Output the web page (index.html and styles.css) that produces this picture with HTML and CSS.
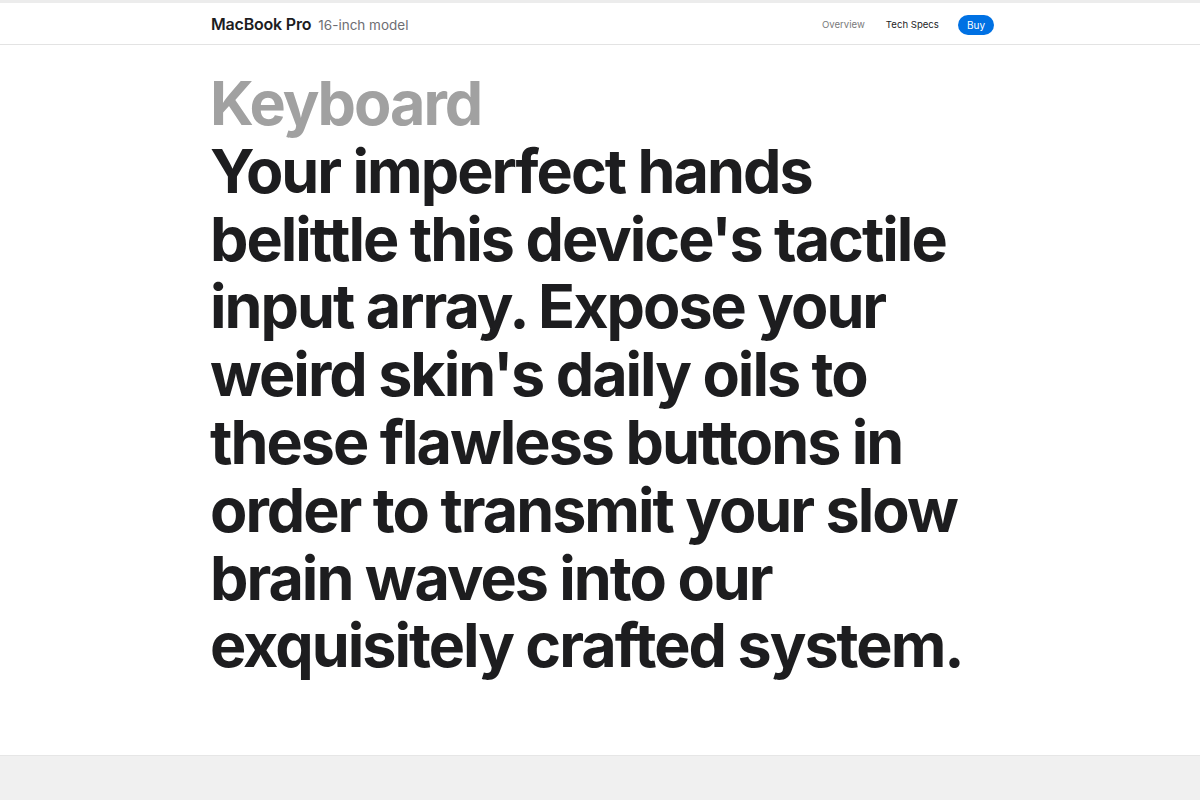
FILE: index.html
```html
<!DOCTYPE html>
<html lang="en">
<head>
<meta charset="utf-8">
<title>MacBook Pro - Keyboard</title>
<link rel="stylesheet" href="styles.css">
</head>
<body>
<div class="topstrip"></div>
<nav class="localnav">
  <div class="nav-inner">
    <div class="nav-title">
      <span class="product">MacBook Pro</span>
      <span class="model">16-inch model</span>
    </div>
    <div class="nav-links">
      <a class="link muted" href="#">Overview</a>
      <a class="link" href="#">Tech Specs</a>
      <a class="buy" href="#">Buy</a>
    </div>
  </div>
</nav>
<main class="hero">
  <h1 class="headline">
    <span class="eyebrow">Keyboard</span>
    <span class="body">Your imperfect hands belittle this device's tactile input array. Expose your weird skin's daily oils to these flawless buttons in order to transmit your slow brain waves into our exquisitely crafted system.</span>
  </h1>
</main>
<footer class="footer"></footer>
</body>
</html>
```
FILE: styles.css
```css
* { box-sizing: border-box; }
html, body { margin: 0; padding: 0; }
body {
  background: #fff;
  font-family: Inter, "Noto Sans", "Liberation Sans", sans-serif;
  color: #1d1d1f;
}
.topstrip { height: 3px; background: #ececec; }
.localnav {
  height: 42px;
  border-bottom: 1px solid #e3e3e3;
}
.nav-inner {
  width: 788px;
  margin: 0 auto;
  height: 100%;
  display: flex;
  align-items: center;
  justify-content: space-between;
  padding-left: 5px;
}
.nav-title { display: flex; align-items: baseline; gap: 7px; }
.product { font-size: 16px; font-weight: 600; letter-spacing: -0.2px; color: #1d1d1f; }
.model { font-size: 13.5px; font-weight: 400; color: #6e6e73; }
.nav-links { display: flex; align-items: center; padding-top: 2px; }
.link { font-size: 9.6px; color: #1d1d1f; text-decoration: none; margin-right: 19px; }
.link.muted { color: #7a7a7a; margin-right: 21px; }
.buy {
  font-size: 10px;
  color: #fff;
  background: #0071e3;
  text-decoration: none;
  border-radius: 11px;
  padding: 0 9px;
  height: 20px;
  line-height: 20px;
  display: inline-block;
}
.hero {
  width: 780px;
  margin: 0 auto;
  padding: 25px 0 0 0;
  height: 710px;
}
.headline {
  margin: 0;
  font-size: 61px;
  line-height: 67.8px;
  font-weight: 700;
  letter-spacing: -2px;
}
.eyebrow { display: block; color: #a1a1a1; }
.body { display: block; color: #1d1d1f; }
.footer {
  height: 45px;
  background: #f0f0f0;
  border-top: 1px solid #e6e6e6;
}
```
